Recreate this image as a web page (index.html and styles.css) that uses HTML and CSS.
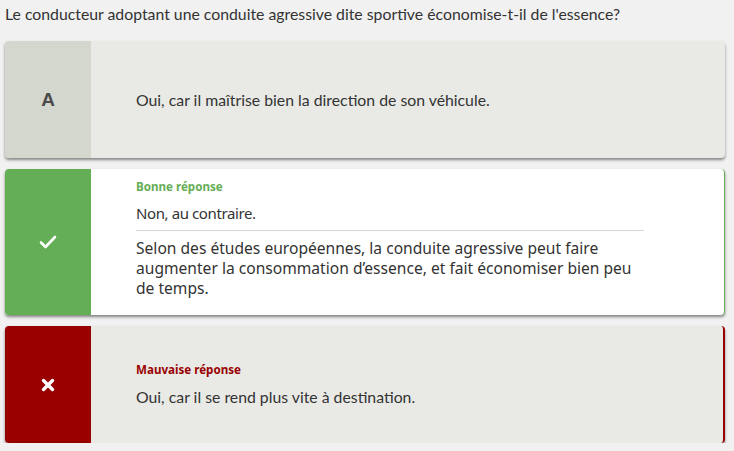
FILE: index.html
```html
<!DOCTYPE html>
<html lang="fr">
<head>
<meta charset="utf-8">
<link rel="stylesheet" href="styles.css">
</head>
<body>
<p class="question">Le conducteur adoptant une conduite agressive dite sportive économise-t-il de l'essence?</p>
<div class="list">
  <div class="card card-neutral">
    <div class="mark mark-neutral">A</div>
    <div class="body">
      <p class="answer">Oui, car il maîtrise bien la direction de son véhicule.</p>
    </div>
  </div>
  <div class="card card-good">
    <div class="mark mark-good">
      <svg width="18" height="14" viewBox="0 0 18 14"><path d="M2 7.5 L6.5 12 L16 2" fill="none" stroke="#fff" stroke-width="2.6" stroke-linecap="round" stroke-linejoin="round"/></svg>
    </div>
    <div class="body body-top">
      <p class="label label-good">Bonne réponse</p>
      <p class="answer answer-u">Non, au contraire.</p>
      <hr class="sep">
      <p class="explain">Selon des études européennes, la conduite agressive peut faire augmenter la consommation d’essence, et fait économiser bien peu de temps.</p>
    </div>
  </div>
  <div class="card card-bad">
    <div class="mark mark-bad">
      <svg width="14" height="14" viewBox="0 0 14 14"><path d="M2.5 2.5 L11.5 11.5 M11.5 2.5 L2.5 11.5" fill="none" stroke="#fff" stroke-width="3.4" stroke-linecap="round"/></svg>
    </div>
    <div class="body">
      <p class="label label-bad label-gap">Mauvaise réponse</p>
      <p class="answer">Oui, car il se rend plus vite à destination.</p>
    </div>
  </div>
</div>
</body>
</html>
```

FILE: styles.css
```css
html, body {
  margin: 0;
  padding: 0;
  background: #f1f1f1;
}
body {
  padding: 5px 5px 0 5px;
  font-family: Lato, "Noto Sans", sans-serif;
  color: #333;
}
.question {
  margin: 0;
  font-family: Lato, sans-serif;
  font-size: 15.8px;
  line-height: 18px;
  color: #333;
}
.list {
  display: flex;
  flex-direction: column;
  gap: 11px;
  margin-top: 18px;
  width: 720px;
}
.card {
  display: flex;
  min-height: 117px;
  border-radius: 4px;
  overflow: hidden;
  box-shadow: 0 2px 3px rgba(0,0,0,0.45);
  background: #e9eae6;
}
.card-good {
  background: #fff;
  border-right: 1px solid #64ae55;
}
.card-bad {
  border-right: 2px solid #990000;
}
.mark {
  flex: 0 0 86px;
  display: flex;
  align-items: center;
  justify-content: center;
}
.mark-neutral {
  background: #d4d7cd;
  font-family: "Liberation Sans", Arial, sans-serif;
  font-weight: bold;
  font-size: 19px;
  color: #4a4a4a;
}
.mark-good { background: #64ae55; }
.mark-bad { background: #990000; }
.body {
  flex: 1;
  display: flex;
  flex-direction: column;
  justify-content: center;
  padding: 12px 80px 12px 45px;
}
.body-top {
  justify-content: flex-start;
  padding-top: 11px;
  padding-bottom: 17px;
}
.answer {
  margin: 0;
  font-family: Lato, sans-serif;
  font-size: 15.8px;
  line-height: 20px;
  color: #333;
}
.answer-u {
  font-family: "Noto Sans", sans-serif;
  font-size: 15px;
  letter-spacing: -0.4px;
  margin-top: 3px;
}
.label {
  margin: 0 0 6px;
  font-family: "Noto Sans", sans-serif;
  font-weight: bold;
  font-size: 11.6px;
  line-height: 14px;
}
.label-gap { margin-bottom: 10px; }
.label-good { color: #64ae55; }
.label-bad { color: #990000; }
.sep {
  border: 0;
  border-top: 1px solid #d4d7cd;
  margin: 7px 0 7px;
  height: 0;
}
.explain {
  margin: 0;
  font-family: "Noto Sans", sans-serif;
  font-size: 15.6px;
  line-height: 20px;
  color: #333;
}
```
